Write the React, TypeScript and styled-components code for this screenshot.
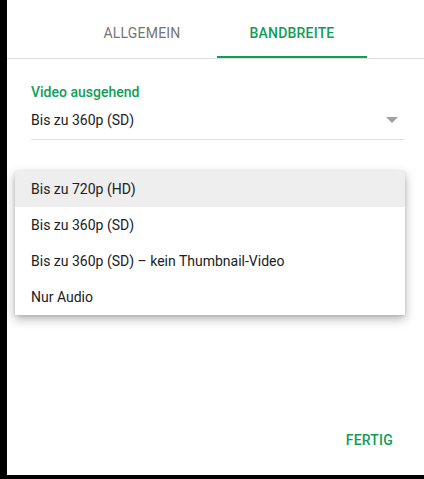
import React from 'react';
import styled, { createGlobalStyle } from 'styled-components';

const GREEN = '#0f9d58';

const GlobalStyle = createGlobalStyle`
  html, body {
    margin: 0;
    padding: 0;
    background: #000;
  }
  body {
    font-family: Roboto, "Liberation Sans", Arial, sans-serif;
  }
`;

const Panel = styled.div`
  position: relative;
  margin-left: 7px;
  height: 475px;
  background: #fff;
  display: flex;
  flex-direction: column;
`;

const TabBar = styled.div`
  display: flex;
  padding-left: 60px;
  border-bottom: 1px solid #e0e0e0;
`;

interface TabProps {
  readonly active?: boolean;
}

const Tab = styled.div<TabProps>`
  width: 150px;
  height: 58px;
  box-sizing: border-box;
  padding-top: 8px;
  display: flex;
  align-items: center;
  justify-content: center;
  font-size: 14px;
  font-weight: ${({ active }) => (active ? 500 : 400)};
  letter-spacing: 0.2px;
  text-transform: uppercase;
  color: ${({ active }) => (active ? GREEN : '#757575')};
  box-shadow: ${({ active }) => (active ? `inset 0 -2px 0 ${GREEN}` : 'none')};
`;

const Field = styled.div`
  margin: 23px 20px 0 24px;
`;

const Label = styled.div`
  font-size: 14px;
  font-weight: 500;
  line-height: 20px;
  color: ${GREEN};
`;

const Select = styled.div`
  margin-top: 6px;
  padding-bottom: 7px;
  border-bottom: 1px solid #e0e0e0;
  display: flex;
  align-items: center;
  justify-content: space-between;
  font-size: 14px;
  line-height: 24px;
  color: #212121;
`;

const Arrow = styled.span`
  width: 0;
  height: 0;
  margin-right: 6px;
  border-left: 6px solid transparent;
  border-right: 6px solid transparent;
  border-top: 6px solid #a0a0a0;
`;

const Menu = styled.ul`
  position: absolute;
  left: 8px;
  top: 171px;
  width: 390px;
  margin: 0;
  padding: 0;
  list-style: none;
  background: #fff;
  box-shadow: 0 4px 10px rgba(0, 0, 0, 0.3), 0 1px 3px rgba(0, 0, 0, 0.12);
`;

interface ItemProps {
  readonly highlighted?: boolean;
}

const MenuItem = styled.li<ItemProps>`
  height: 36px;
  display: flex;
  align-items: center;
  padding-left: 16px;
  font-size: 14px;
  color: #212121;
  background: ${({ highlighted }) => (highlighted ? '#eeeeee' : '#fff')};
`;

const Footer = styled.div`
  margin-top: auto;
  display: flex;
  justify-content: flex-end;
  padding: 0 23px 17px 0;
`;

const TextButton = styled.button`
  height: 36px;
  padding: 0 8px;
  border: none;
  background: none;
  font-family: inherit;
  font-size: 14px;
  font-weight: 500;
  letter-spacing: 0.2px;
  color: ${GREEN};
  text-transform: uppercase;
`;

const options = [
  'Bis zu 720p (HD)',
  'Bis zu 360p (SD)',
  'Bis zu 360p (SD) – kein Thumbnail-Video',
  'Nur Audio',
];

export default function App() {
  return (
    <>
      <GlobalStyle />
      <Panel>
        <TabBar>
          <Tab>Allgemein</Tab>
          <Tab active>Bandbreite</Tab>
        </TabBar>
        <Field>
          <Label>Video ausgehend</Label>
          <Select>
            <span>Bis zu 360p (SD)</span>
            <Arrow />
          </Select>
        </Field>
        <Menu>
          {options.map((o, i) => (
            <MenuItem key={o} highlighted={i === 0}>
              {o}
            </MenuItem>
          ))}
        </Menu>
        <Footer>
          <TextButton>Fertig</TextButton>
        </Footer>
      </Panel>
    </>
  );
}
